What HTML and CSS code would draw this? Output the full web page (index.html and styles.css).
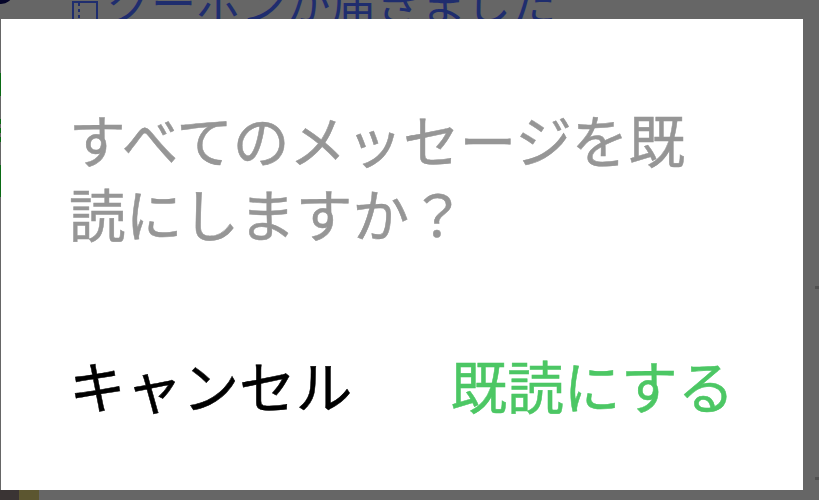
FILE: index.html
```html
<!DOCTYPE html>
<html lang="ja">
<head>
  <meta charset="UTF-8" />
  <meta name="viewport" content="width=device-width, initial-scale=1.0"/>
  <title>既読にする</title>
  <link rel="stylesheet" href="styles.css">
</head>
<body>
  <!-- 後ろのリスト -->
  <div class="behind">
    <span class="corner"></span>
    <div class="coupon">
      <svg class="coupon-icon" width="26" height="40" viewBox="0 0 26 40">
        <path d="M1 1H25V39H1Z" fill="none" stroke="#1f2d6e" stroke-width="2"/>
        <path d="M7 2V38" fill="none" stroke="#1f2d6e" stroke-width="2" stroke-dasharray="3 3"/>
      </svg>
      <span class="coupon-text">クーポンが届きました</span>
    </div>
    <span class="edge edge-a"></span>
    <span class="edge edge-b"></span>
    <span class="edge edge-c"></span>
    <span class="edge edge-d"></span>
    <span class="edge edge-e"></span>
    <span class="tick tick-a"></span>
    <span class="tick tick-b"></span>
    <span class="photo"></span>
  </div>

  <div class="dialog">
    <p class="message">すべてのメッセージを既読にしますか？</p>
    <div class="actions">
      <button class="action">キャンセル</button>
      <button class="action action-ok">既読にする</button>
    </div>
  </div>
</body>
</html>
```

FILE: styles.css
```css
html, body {
  height: 100%;
}

body {
  margin: 0;
  overflow: hidden;
  position: relative;
  background: #666;
  font-family: "Noto Sans CJK JP", "Noto Sans", sans-serif;
  padding: 19px 16px 10px 1px;
  box-sizing: border-box;
}

.behind {
  position: absolute;
  inset: 0;
}

.corner {
  position: absolute;
  top: -14px;
  left: -10px;
  width: 22px;
  height: 18px;
  border-radius: 50%;
  background: #05052a;
}

.coupon {
  position: absolute;
  top: -28px;
  left: 72px;
  display: flex;
  align-items: flex-start;
  gap: 8px;
  font-size: 45px;
  line-height: 60px;
  white-space: nowrap;
  color: #1f2d6e;
}

.coupon-icon {
  margin-top: 29px;
}

.edge {
  position: absolute;
  left: 0;
  width: 1px;
  background: #0a6a14;
}

.edge-a { top: 73px; height: 23px; }
.edge-b { top: 119px; height: 5px; }
.edge-c { top: 128px; height: 5px; }
.edge-d { top: 137px; height: 5px; }
.edge-e { top: 165px; height: 32px; }

.tick {
  position: absolute;
  right: 0;
  width: 4px;
  height: 3px;
  background: #505050;
}

.tick-a { top: 286px; }
.tick-b { top: 477px; }

.photo {
  position: absolute;
  left: 0;
  bottom: 0;
  width: 39px;
  height: 10px;
  background: linear-gradient(90deg, #3a3434 48%, #5c5630 48%);
}

.dialog {
  position: relative;
  height: 471px;
  background: #fff;
  padding: 82px 68px 0;
  box-sizing: border-box;
  display: flex;
  flex-direction: column;
}

.message {
  margin: 0;
  font-size: 56.7px;
  line-height: 74px;
  -webkit-text-stroke: 0.5px currentColor;
  color: #969696;
}

.actions {
  display: flex;
  gap: 98px;
  margin-top: 99px;
}

.action {
  padding: 0;
  border: none;
  background: none;
  font: inherit;
  font-size: 56.7px;
  line-height: 73px;
  -webkit-text-stroke: 0.5px currentColor;
  white-space: nowrap;
  color: #000;
}

.action-ok {
  color: #4cc764;
}
```
